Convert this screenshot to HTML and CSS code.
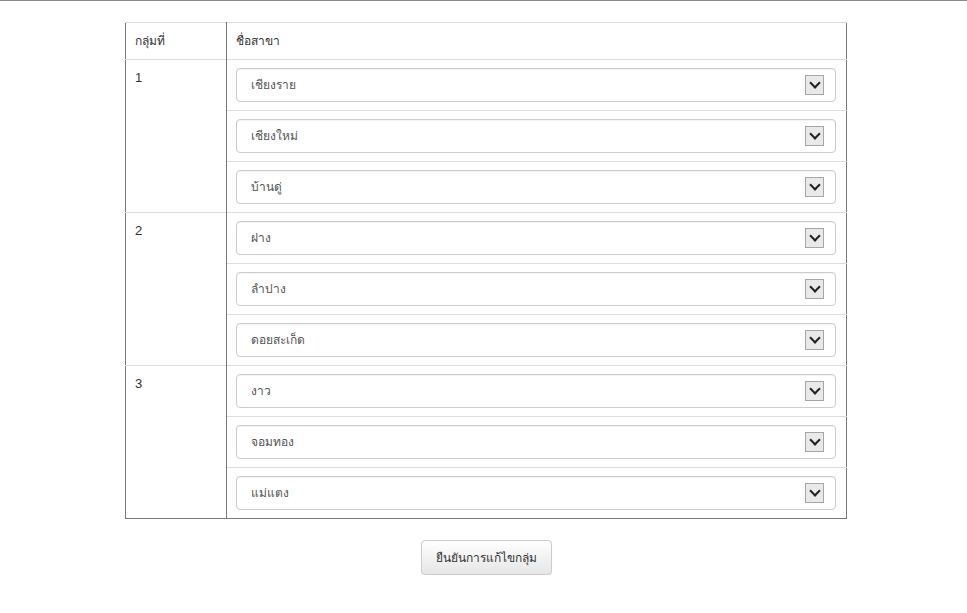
FILE: index.html
```html
<!DOCTYPE html>
<html lang="th">
<head>
    <meta charset="UTF-8">
    <meta name="viewport" content="width=device-width, initial-scale=1.0">
    <title>แก้ไขกลุ่มสาขา</title>
    <link rel="stylesheet" href="styles.css">
</head>
<body>

<div class="page">
    <table class="groupTable">
        <thead>
            <tr>
                <th class="colGroup">กลุ่มที่</th>
                <th>ชื่อสาขา</th>
            </tr>
        </thead>
        <tbody>
            <tr>
                <td class="groupNo" rowspan="3">1</td>
                <td><div class="branchSelect"><span>เชียงราย</span><i class="arrow"></i></div></td>
            </tr>
            <tr>
                <td><div class="branchSelect"><span>เชียงใหม่</span><i class="arrow"></i></div></td>
            </tr>
            <tr>
                <td><div class="branchSelect"><span>บ้านดู่</span><i class="arrow"></i></div></td>
            </tr>
            <tr>
                <td class="groupNo" rowspan="3">2</td>
                <td><div class="branchSelect"><span>ฝาง</span><i class="arrow"></i></div></td>
            </tr>
            <tr>
                <td><div class="branchSelect"><span>ลำปาง</span><i class="arrow"></i></div></td>
            </tr>
            <tr>
                <td><div class="branchSelect"><span>ดอยสะเก็ด</span><i class="arrow"></i></div></td>
            </tr>
            <tr>
                <td class="groupNo" rowspan="3">3</td>
                <td><div class="branchSelect"><span>งาว</span><i class="arrow"></i></div></td>
            </tr>
            <tr>
                <td><div class="branchSelect"><span>จอมทอง</span><i class="arrow"></i></div></td>
            </tr>
            <tr>
                <td><div class="branchSelect"><span>แม่แตง</span><i class="arrow"></i></div></td>
            </tr>
        </tbody>
    </table>

    <div class="actions">
        <button type="button" class="btn">ยืนยันการแก้ไขกลุ่ม</button>
    </div>
</div>

</body>
</html>
```

FILE: styles.css
```css
body {
    font-family: Tahoma, "DejaVu Sans", "Noto Sans", sans-serif;
    font-size: 12px;
    margin: 0;
    padding: 0;
    color: #333;
    background-color: #fff;
    border-top: 1px solid #8a8a8a;
}

.page {
    width: 722px;
    margin: 21px auto 0;
    padding-left: 5px;
}

.groupTable {
    width: 722px;
    border-collapse: collapse;
    border-left: 1px solid #777;
    border-right: 1px solid #777;
    border-bottom: 1px solid #777;
    border-top: 1px solid #ddd;
}

.groupTable th,
.groupTable td {
    text-align: left;
    vertical-align: top;
    font-weight: normal;
    line-height: 20px;
    padding: 8px 9px;
    border-top: 1px solid #ddd;
}

.groupTable .colGroup,
.groupTable .groupNo {
    width: 82px;
    border-right: 1px solid #777;
}

.groupNo {
    font-family: Arial, "Liberation Sans", sans-serif;
    font-size: 13px;
}

.groupTable td:not(.groupNo) {
    padding-right: 10px;
}

.branchSelect {
    display: flex;
    align-items: center;
    justify-content: space-between;
    height: 32px;
    padding: 0 11px 0 14px;
    border: 1px solid #ccc;
    border-radius: 4px;
    box-shadow: inset 0 1px 1px rgba(0, 0, 0, 0.05);
    color: #555;
}

.arrow {
    width: 17px;
    height: 18px;
    border: 1px solid #a6a6a6;
    background-color: #e9e9e9;
    display: flex;
    align-items: center;
    justify-content: center;
}

.arrow::after {
    content: "";
    width: 6px;
    height: 6px;
    border-right: 2px solid #222;
    border-bottom: 2px solid #222;
    transform: translateY(-2px) rotate(45deg);
}

.actions {
    text-align: center;
    margin-top: 21px;
}

.btn {
    font-family: Tahoma, "DejaVu Sans", "Noto Sans", sans-serif;
    font-size: 12px;
    color: #333;
    height: 35px;
    padding: 0 14px;
    border: 1px solid #ccc;
    border-radius: 4px;
    background-image: linear-gradient(to bottom, #fff 0%, #e6e6e6 100%);
    box-shadow: 0 1px 1px rgba(0, 0, 0, 0.08);
    cursor: pointer;
}

.btn:hover {
    background-color: #e6e6e6;
}
```
